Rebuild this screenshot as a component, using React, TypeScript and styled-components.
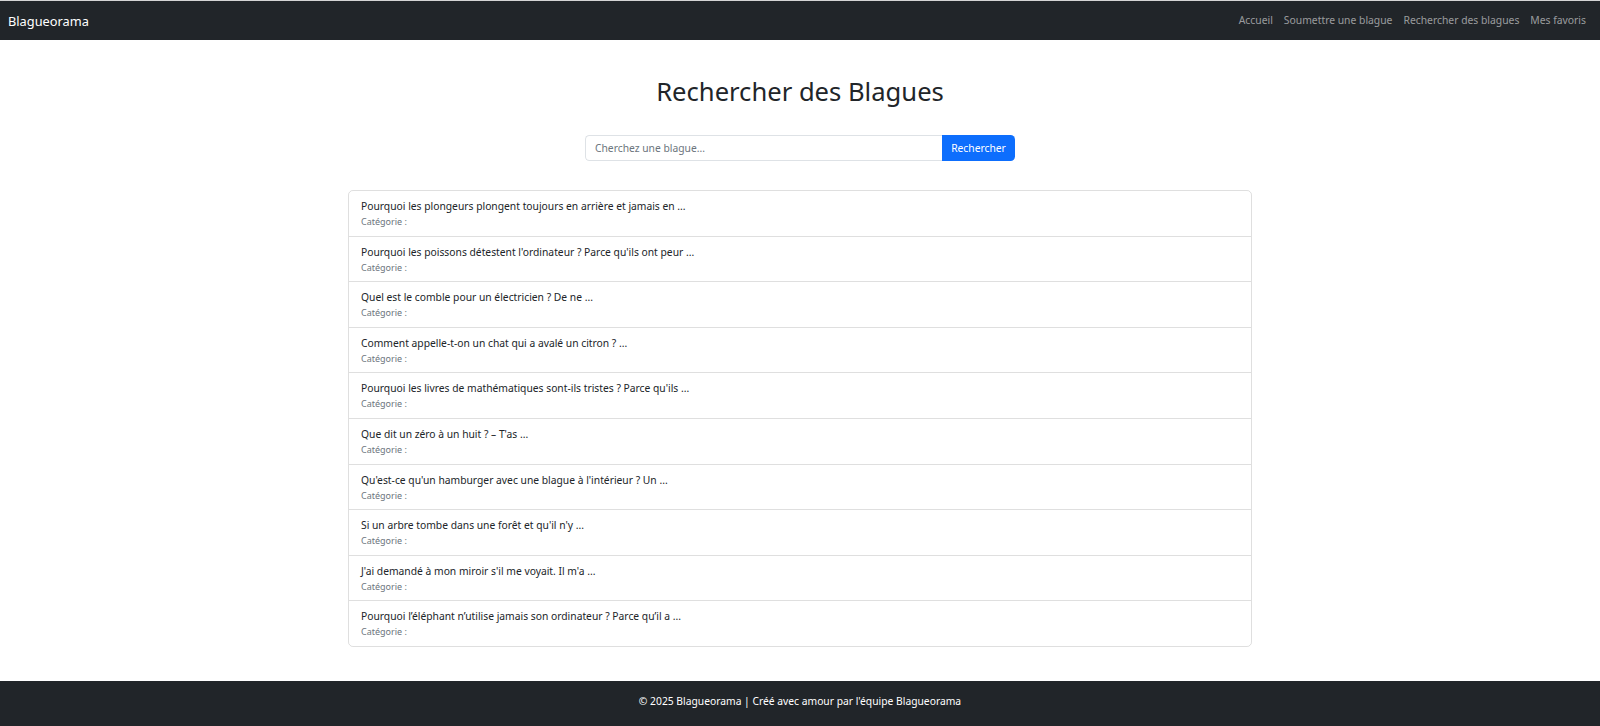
import React from "react";
import styled, { createGlobalStyle } from "styled-components";

const GlobalStyle = createGlobalStyle`
  html, body {
    margin: 0;
    padding: 0;
  }
  body {
    border-top: 1px solid #d4d4d4;
    font-family: "Noto Sans", "Open Sans", sans-serif;
    color: #212529;
    background: #fff;
  }
  #root {
    min-height: calc(100vh - 1px);
    display: flex;
    flex-direction: column;
  }
`;

const Navbar = styled.nav`
  background: #212529;
  height: 38.5px;
  box-sizing: border-box;
  padding: 2px 8.5px 0 8px;
  display: flex;
  align-items: center;
  justify-content: space-between;
`;

const Brand = styled.a`
  color: #fff;
  font-size: 12.8px;
  line-height: 1.5;
  text-decoration: none;
`;

const NavList = styled.ul`
  display: flex;
  list-style: none;
  margin: 0;
  padding: 0;
`;

const NavLink = styled.a`
  display: block;
  padding: 0 5.5px;
  color: rgba(255, 255, 255, 0.55);
  font-size: 10.35px;
  line-height: 1.5;
  text-decoration: none;
`;

const Main = styled.main`
  flex: 1;
  display: flex;
  flex-direction: column;
  align-items: center;
  padding-top: 37.9px;
  padding-bottom: 34px;
`;

const Title = styled.h1`
  margin: 0;
  font-size: 25.6px;
  font-weight: 400;
  line-height: 1.2;
  color: #212529;
`;

const SearchForm = styled.form`
  display: flex;
  width: 430px;
  height: 26.5px;
  margin-top: 26.9px;
`;

const SearchInput = styled.input`
  flex: 1;
  min-width: 0;
  box-sizing: border-box;
  border: 1px solid #dee2e6;
  border-right: none;
  border-radius: 4.5px 0 0 4.5px;
  padding: 0 9px;
  font-family: inherit;
  font-size: 10.3px;
  color: #212529;
  outline: none;
  &::placeholder {
    color: #6c757d;
  }
`;

const SearchButton = styled.button`
  width: 73px;
  box-sizing: border-box;
  border: none;
  border-radius: 0 4.5px 4.5px 0;
  background: #0d6efd;
  color: #fff;
  font-family: inherit;
  font-size: 10.3px;
  padding: 0;
  cursor: pointer;
`;

const JokeList = styled.ul`
  width: 904px;
  box-sizing: border-box;
  margin: 28.5px 0 0;
  padding: 0;
  list-style: none;
  border: 1px solid rgba(0, 0, 0, 0.125);
  border-radius: 5px;
`;

const JokeItem = styled.li`
  padding: 6px 12px;
  & + & {
    border-top: 1px solid rgba(0, 0, 0, 0.125);
  }
`;

const JokeText = styled.div`
  font-size: 10.3px;
  line-height: 18px;
  color: #212529;
`;

const Category = styled.small`
  display: block;
  font-size: 9px;
  line-height: 14.6px;
  color: #6c757d;
`;

const Footer = styled.footer`
  background: #212529;
  color: #fff;
  text-align: center;
  font-size: 10.3px;
  line-height: 21px;
  padding: 9.5px 0 14.5px;
`;

const links = ["Accueil", "Soumettre une blague", "Rechercher des blagues", "Mes favoris"];

const jokes = [
  "Pourquoi les plongeurs plongent toujours en arrière et jamais en ...",
  "Pourquoi les poissons détestent l'ordinateur ? Parce qu'ils ont peur ...",
  "Quel est le comble pour un électricien ? De ne ...",
  "Comment appelle-t-on un chat qui a avalé un citron ? ...",
  "Pourquoi les livres de mathématiques sont-ils tristes ? Parce qu'ils ...",
  "Que dit un zéro à un huit ? – T'as ...",
  "Qu'est-ce qu'un hamburger avec une blague à l'intérieur ? Un ...",
  "Si un arbre tombe dans une forêt et qu'il n'y ...",
  "J'ai demandé à mon miroir s'il me voyait. Il m'a ...",
  "Pourquoi l’éléphant n’utilise jamais son ordinateur ? Parce qu’il a ...",
];

export default function App() {
  return (
    <>
      <GlobalStyle />
      <Navbar>
        <Brand href="#">Blagueorama</Brand>
        <NavList>
          {links.map((l) => (
            <li key={l}>
              <NavLink href="#">{l}</NavLink>
            </li>
          ))}
        </NavList>
      </Navbar>
      <Main>
        <Title>Rechercher des Blagues</Title>
        <SearchForm onSubmit={(e) => e.preventDefault()}>
          <SearchInput type="text" placeholder="Cherchez une blague..." />
          <SearchButton type="submit">Rechercher</SearchButton>
        </SearchForm>
        <JokeList>
          {jokes.map((j, i) => (
            <JokeItem key={i}>
              <JokeText>{j}</JokeText>
              <Category>Catégorie :</Category>
            </JokeItem>
          ))}
        </JokeList>
      </Main>
      <Footer>© 2025 Blagueorama | Créé avec amour par l'équipe Blagueorama</Footer>
    </>
  );
}
